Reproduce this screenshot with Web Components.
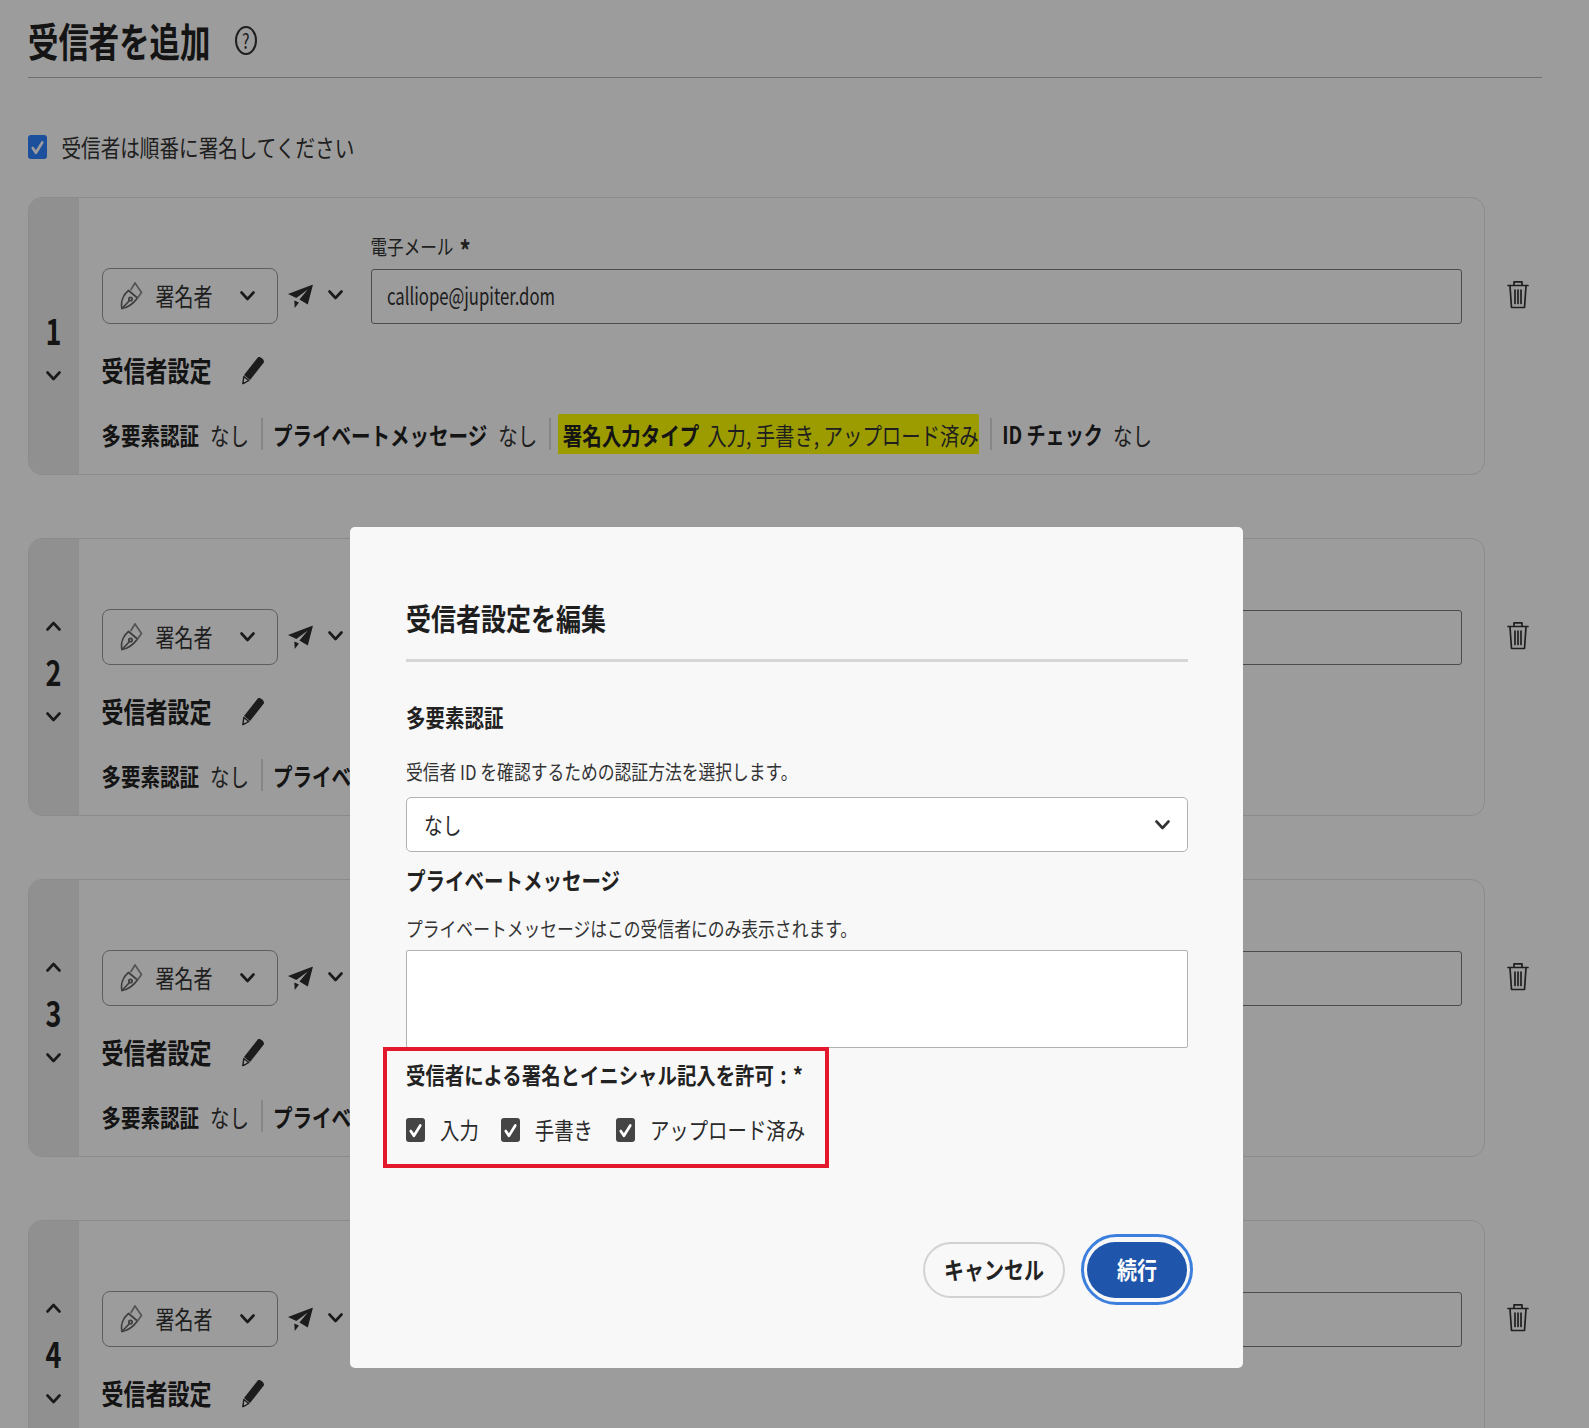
<!DOCTYPE html>
<html lang="ja"><head><meta charset="utf-8"><title>受信者を追加</title>
<style>
html,body{margin:0;padding:0;background:#fff}
body{width:1589px;height:1428px;overflow:hidden;position:relative;font-family:"Noto Sans CJK JP","Noto Sans",sans-serif;color:#2a2a2a}
</style></head><body>
<add-recipients></add-recipients>
<edit-dialog></edit-dialog>
<script>
const base=`.t{display:inline-block;transform:translateY(var(--dy,0)) scaleY(var(--sy,1.25));white-space:nowrap}svg{display:block;flex:none}`;
const chev=(w=15,h=10,sw=2.6,c='#2c2c2c')=>`<svg width="${w}" height="${h}" viewBox="0 0 15 10" preserveAspectRatio="none"><path d="M1.5 1.5 7.5 8 13.5 1.5" fill="none" stroke="${c}" stroke-width="${sw}" stroke-linecap="round" stroke-linejoin="round"/></svg>`;
const chevUp=()=>`<svg width="15" height="10" viewBox="0 0 15 10"><path d="M1.5 8.5 7.5 2 13.5 8.5" fill="none" stroke="#2c2c2c" stroke-width="2.6" stroke-linecap="round" stroke-linejoin="round"/></svg>`;
function def(name,css,html){customElements.define(name,class extends HTMLElement{
  connectedCallback(){if(this.shadowRoot)return;const r=this.attachShadow({mode:'open'});
    r.innerHTML=`<style>${base}${css}</style>`+(typeof html==='function'?html(this):html);}
});}

def('check-box',`:host{display:inline-flex;align-items:center;font-size:var(--fs,19.4px);line-height:24px}
.b{width:19px;height:24px;border-radius:3px;background:var(--box,#444);display:flex;align-items:center;justify-content:center;flex:none;margin-right:var(--gap,15px)}`,
`<span class="b"><svg width="13" height="15" viewBox="0 0 13 13" preserveAspectRatio="none"><path d="M1.8 7 5 11 11.2 2.2" fill="none" stroke="#fff" stroke-width="2.6" stroke-linecap="round" stroke-linejoin="round"/></svg></span><span class="t"><slot></slot></span>`);

def('role-select',`:host{display:flex;align-items:center;width:176px;height:56px;box-sizing:border-box;border:1.5px solid #9a9a9a;border-radius:8px;padding-left:17px}
.n{font-size:19px;line-height:26px;--sy:1.3;margin-left:13px;width:84px;color:#333}`,
`<svg width="23" height="28" viewBox="0 0 23 28" fill="none" stroke="#666" stroke-width="1.7" stroke-linejoin="round" stroke-linecap="round"><path d="M2 26.500C.5 20 3 13 8.500 8.500L17.500 16C13 22 8.500 25.500 2 26.500Z"/><path d="M2 26.500 9.500 18.500"/><circle cx="10.500" cy="17" r="1.700"/><path d="M11 7.500 15 1M15 1 21.500 10.500 17.500 16" stroke="#8a8a8a"/></svg><span class="t n">署名者</span>${chev()}`);

def('recipient-row',`:host{display:flex;align-items:flex-start}
.card{width:1456.500px;height:278px;box-sizing:border-box;border:1.5px solid #e4e4e4;border-radius:14px;display:flex;overflow:hidden;flex:none}
.num{width:50px;flex:none;background:#ececec;display:flex;flex-direction:column;align-items:center;padding-top:82px;box-sizing:border-box;margin-left:-.5px}
.num .ph{height:10px}
.num b{font-size:27px;line-height:26px;margin:28px 0 27px;--sy:1.3;color:#222}
.body{flex:1;padding:35px 22px 0 23px;min-width:0}
.r1{display:flex;align-items:flex-end}
.send{display:flex;align-items:center;height:56px;margin:0 0 1px 10.500px;width:82.500px}
.send svg:first-child{transform:translateY(1.500px)}
.send svg+svg{margin-left:15px}
.f{flex:1;min-width:0}
.lab{font-size:16.600px;line-height:24px;--sy:1.25;display:block;height:36px;color:#333}
.lab i{display:inline-block;font-style:normal;font-weight:700;font-size:22px;margin-left:6px;line-height:20px;transform:translateY(5px)}
.in{height:55px;box-sizing:border-box;border:1.5px solid #7d7d7d;border-radius:3px;padding-left:15.500px;display:flex;align-items:center;font-size:16.700px;color:#333}
.in .t{--sy:1.4;--dy:-1.500px}
.h{display:flex;align-items:center;margin-top:30px;height:30px}
.h .t{font-size:22px;font-weight:700;line-height:30px;--sy:1.28;color:#222}
.h svg{margin-left:30px;transform:translateY(1.500px)}
.s{display:flex;align-items:center;height:40px;margin-top:30px;font-size:19.500px;white-space:nowrap;--sy:1.25}
.s b{font-weight:700;color:#222}
.s .v{margin-left:11px;color:#333}
.sep{width:1.5px;height:32px;background:#dcdcdc;margin:0 10.500px 0 12px;flex:none}
.hl{background:#ff0;height:40px;display:flex;align-items:center;padding-left:5px;box-sizing:border-box;margin-left:-3.500px}
.hl+.sep{margin-left:11.500px}
.hl .v{margin-left:8px;font-size:19.400px}
.id{font-size:19.100px}
.id+.v{margin-left:10px}
.trash{margin:83px 0 0 22px}`,
h=>{const i=h.getAttribute('index');const email=h.getAttribute('email');const mode=h.getAttribute('summary');
const s=mode==='none'?'':mode==='clipped'?`<div class="s"><b class="t">多要素認証</b><span class="t v">なし</span><span class="sep"></span><b class="t">プライベ</b></div>`:
`<div class="s"><b class="t">多要素認証</b><span class="t v">なし</span><span class="sep"></span><b class="t">プライベートメッセージ</b><span class="t v">なし</span><span class="sep"></span><span class="hl"><b class="t">署名入力タイプ</b><span class="t v">入力, 手書き, アップロード済み</span></span><span class="sep"></span><b class="t id">ID チェック</b><span class="t v">なし</span></div>`;
return `<div class="card"><div class="num">${i==='1'?'<div class="ph"></div>':chevUp()}<b class="t">${i}</b>${chev()}</div>
<div class="body"><div class="r1"><role-select></role-select><div class="send"><svg width="25" height="24" viewBox="0 0 24 24" preserveAspectRatio="none" fill="#2e2e2e"><path d="M24 0 0 9.500 8 13.500 19 5 11 15 19 20Z"/><path d="M6 16 10.500 18 6.500 23.500Z"/></svg>${chev()}</div>
<div class="f"><span class="lab">${email?'<span class="t">電子メール<i>*</i></span>':''}</span><div class="in">${email?`<span class="t">${email}</span>`:''}</div></div></div>
<div class="h"><span class="t">受信者設定</span><svg width="22" height="28" viewBox="0 0 22 28"><path d="M16 .8C18 -.8 23 3.500 21.800 6L8 23.500 2 18.500Z" fill="#2e2e2e"/><path d="M1.800 20 6.800 24 .8 27.300Z" fill="none" stroke="#2e2e2e" stroke-width="1.400" stroke-linejoin="round"/></svg></div>
${s}
</div></div>
<svg class="trash" width="22" height="29" viewBox="0 0 22 29" fill="none" stroke="#333" stroke-width="1.700" stroke-linecap="round" stroke-linejoin="round"><path d="M1 5.500H21M7 5V1.800H15V5M3 6 4.500 27.500H17.500L19 6M8 10V23.500M11 10V23.500M14 10V23.500"/></svg>`});

def('add-recipients',`:host{display:block;position:relative;width:1589px;height:1428px;overflow:hidden;background:#fff}
.top{margin-left:28px;width:1514px;height:77px;border-bottom:1.500px solid #b6b6b6;display:flex;align-items:center}
h1{margin:3px 0 0;font-size:30.400px;line-height:44px;font-weight:700;--sy:1.3;color:#222}
.help{width:18px;height:25px;border:2px solid #333;border-radius:50%;margin:3px 0 0 24.500px;display:flex;align-items:center;justify-content:center;font-size:16px;color:#333}
.help .t{--sy:1.3}
.seq{margin:56px 0 0 28px;height:26px;display:flex;align-items:center;--fs:19.600px;--box:#2e82ff;--gap:14.500px;--sy:1.22;color:#333}
.list{margin:37px 0 0 28px;display:flex;flex-direction:column;gap:63.100px}`,
`<div class="top"><h1 class="t">受信者を追加</h1><span class="help"><span class="t">?</span></span></div>
<div class="seq"><check-box>受信者は順番に署名してください</check-box></div>
<div class="list"><recipient-row index="1" email="calliope@jupiter.dom"></recipient-row><recipient-row index="2" summary="clipped"></recipient-row><recipient-row index="3" summary="clipped"></recipient-row><recipient-row index="4" summary="none"></recipient-row></div>
<div style="position:absolute;inset:0;background:rgba(0,0,0,.39)"></div>`);

def('edit-dialog',`:host{display:block;position:absolute;left:350px;top:527px;width:893px;height:841px;box-sizing:border-box;background:#f8f8f8;border-radius:5px;padding:75px 55px 0 56px;color:#2a2a2a;--dy:-2px}
h2{margin:0;font-size:25px;line-height:34px;font-weight:700;--sy:1.2;color:#1e1e1e}
hr{margin:23px 0 0;border:0;height:2.500px;background:#d6d6d6}
h3{margin:0;font-size:19.500px;line-height:26px;font-weight:700;--sy:1.2;color:#222}
.d{font-size:16.800px;line-height:22px;--sy:1.2;color:#333;--dy:-.5px}
.sel{margin-top:14px;height:55px;box-sizing:border-box;background:#fff;border:1.500px solid #b2b2b2;border-radius:5px;display:flex;align-items:center;justify-content:space-between;padding:0 17px;font-size:18.700px;--sy:1.2;--dy:-1px}
.ta{margin-top:10px;height:98px;box-sizing:border-box;background:#fff;border:1.500px solid #b2b2b2;border-radius:2px}
.g{margin:-1px 0 0 -22.700px;width:445.700px;height:121px;box-sizing:border-box;border:4px solid #e3182d;padding:13px 0 0 18.700px}
.gl{font-size:19.400px;line-height:26px;font-weight:700;--sy:1.15;color:#222;word-spacing:2px}
.cbs{display:flex;margin-top:28px;--sy:1.2;--dy:-1px}
.btns{display:flex;justify-content:flex-end;gap:22px;margin:74px 1px 0 0}
.bt{position:relative;height:56px;box-sizing:border-box;border-radius:28px;display:flex;align-items:center;justify-content:center;font-size:20px;font-weight:700;--sy:1.2}
.c{width:142px;border:2.500px solid #d2d2d2;color:#222}
.p{width:100px;background:#1f56ab;color:#fff}
.p::before{content:"";position:absolute;inset:-8px -6px -7px;border:3px solid #3d7fdd;border-radius:36px}`,
`<h2><span class="t">受信者設定を編集</span></h2><hr>
<h3 style="margin-top:44.500px"><span class="t">多要素認証</span></h3>
<div class="d" style="margin-top:29px"><span class="t">受信者 ID を確認するための認証方法を選択します。</span></div>
<div class="sel"><span class="t">なし</span>${chev(15,10,2.6,'#333')}</div>
<h3 style="margin-top:16px;--dy:-1px"><span class="t">プライベートメッセージ</span></h3>
<div class="d" style="margin-top:24px"><span class="t">プライベートメッセージはこの受信者にのみ表示されます。</span></div>
<div class="ta"></div>
<div class="g"><div class="gl"><span class="t">受信者による署名とイニシャル記入を許可 : *</span></div>
<div class="cbs"><check-box style="margin-right:22px">入力</check-box><check-box style="margin-right:23px">手書き</check-box><check-box>アップロード済み</check-box></div></div>
<div class="btns"><div class="bt c"><span class="t">キャンセル</span></div><div class="bt p"><span class="t">続行</span></div></div>`);
</script>
</body></html>
